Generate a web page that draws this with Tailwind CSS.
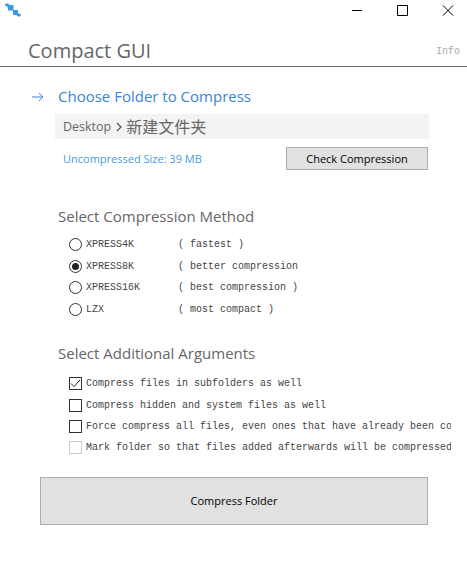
<!DOCTYPE html>
<html>
<head>
<meta charset="utf-8">
<script src="https://cdn.jsdelivr.net/npm/@tailwindcss/browser@4"></script>
</head>
<body class="bg-white overflow-hidden">
<div class="w-[467px] h-[580px] flex flex-col font-['Open_Sans','Noto_Sans_CJK_SC',sans-serif] overflow-hidden">
  <div class="h-[30px] flex justify-between shrink-0">
    <svg class="ml-[5px] mt-[3px]" width="16" height="14" viewBox="0 0 16 14"><path d="M0 1.500L1 0.500H3L4 1.500L5 2H8.500V7.500H3V5L2 3.500L0 2.500Z M8 7H13V9.500L14 10.500L16 11.500V12.500L15 13.500H13L12 12.500L10.500 12H8Z" fill="#3b9ae8"/></svg>
    <svg width="115" height="22" viewBox="0 0 115 22"><path d="M0 10.500H10" stroke="#000" fill="none"/><path d="M45.500 5.500H55.500V15.500H45.500Z" stroke="#000" fill="none"/><path d="M91 5.500L101 15.500M101 5.500L91 15.500" stroke="#000" fill="none"/></svg>
  </div>
  <div class="h-[37px] border-b border-[#6a6a6a] flex justify-between shrink-0 pl-[28px] pr-[7px]">
    <span class="text-[20px] leading-[42px] text-[#666666]">Compact GUI</span>
    <span class="font-['Liberation_Mono'] text-[10px] leading-[44px] text-[#aaaaaa]">Info</span>
  </div>
  <div class="flex items-center h-[20px] mt-[19px] pl-[32px] shrink-0">
    <svg width="12" height="10" viewBox="0 0 12 10" class="mr-[14px] mt-[2px]"><path d="M0 5H11M7 1L11 5L7 9" stroke="#3b82d6" fill="none"/></svg>
    <span class="text-[15px] leading-[18px] text-[#3a84d8]">Choose Folder to Compress</span>
  </div>
  <div class="ml-[55px] mr-[38px] mt-[8px] h-[25px] bg-[#f3f3f3] flex items-center pl-[8px] shrink-0 text-[#666666]">
    <span class="text-[12.500px] pt-[2px]">Desktop</span>
    <svg width="6" height="10" viewBox="0 0 6 10" class="ml-[5px] mr-[4px]"><path d="M1 1L5 5L1 9" stroke="#555" stroke-width="1.300" fill="none"/></svg>
    <span class="text-[16px]">新建文件夹</span>
  </div>
  <div class="flex justify-between items-center ml-[63px] mr-[39px] mt-[8px] h-[23px] shrink-0">
    <span class="text-[11px] pt-[2px] text-[#4a9be0]">Uncompressed Size: 39 MB</span>
    <button class="w-[142px] h-[23px] bg-[#e1e1e1] border border-[#adadad] text-[11px] pt-[1px] text-black">Check Compression</button>
  </div>
  <div class="ml-[58px] mt-[36px] text-[15px] leading-[20px] text-[#666666] shrink-0">Select Compression Method</div>
  <div class="ml-[69px] mt-[8px] flex flex-col font-['Liberation_Mono'] text-[10px] text-[#444444] shrink-0">
    <div class="h-[21.500px] flex items-center"><span class="w-[13px] h-[13px] rounded-full border border-[#333] mr-[4px]"></span><span class="w-[92px]">XPRESS4K</span><span>( fastest )</span></div>
    <div class="h-[21.500px] flex items-center"><span class="w-[13px] h-[13px] rounded-full border border-[#333] mr-[4px] flex items-center justify-center"><span class="w-[7px] h-[7px] rounded-full bg-[#222]"></span></span><span class="w-[92px]">XPRESS8K</span><span>( better compression</span></div>
    <div class="h-[21.500px] flex items-center"><span class="w-[13px] h-[13px] rounded-full border border-[#333] mr-[4px]"></span><span class="w-[92px]">XPRESS16K</span><span>( best compression )</span></div>
    <div class="h-[21.500px] flex items-center"><span class="w-[13px] h-[13px] rounded-full border border-[#333] mr-[4px]"></span><span class="w-[92px]">LZX</span><span>( most compact )</span></div>
  </div>
  <div class="ml-[58px] mt-[23px] text-[15px] leading-[20px] text-[#666666] shrink-0">Select Additional Arguments</div>
  <div class="ml-[69px] mr-[16px] mt-[10px] flex flex-col font-['Liberation_Mono'] text-[10px] text-[#444444] shrink-0 overflow-hidden whitespace-nowrap">
    <div class="h-[21.500px] flex items-center"><span class="w-[13px] h-[13px] border border-[#333] mr-[4px] shrink-0 flex items-center justify-center"><svg width="11" height="9" viewBox="0 0 11 9"><path d="M1 4.500L4 7.500L10 1" stroke="#222" fill="none"/></svg></span>Compress files in subfolders as well</div>
    <div class="h-[21.500px] flex items-center"><span class="w-[13px] h-[13px] border border-[#333] mr-[4px] shrink-0"></span>Compress hidden and system files as well</div>
    <div class="h-[21px] flex items-center"><span class="w-[13px] h-[13px] border border-[#333] mr-[4px] shrink-0"></span>Force compress all files, even ones that have already been compressed</div>
    <div class="h-[21px] flex items-center"><span class="w-[13px] h-[13px] border border-[#cccccc] mr-[4px] shrink-0"></span>Mark folder so that files added afterwards will be compressed</div>
  </div>
  <button class="ml-[40px] mt-[19px] w-[388px] h-[48px] bg-[#e1e1e1] border border-[#adadad] text-[11px] text-black shrink-0">Compress Folder</button>
</div>
</body>
</html>
